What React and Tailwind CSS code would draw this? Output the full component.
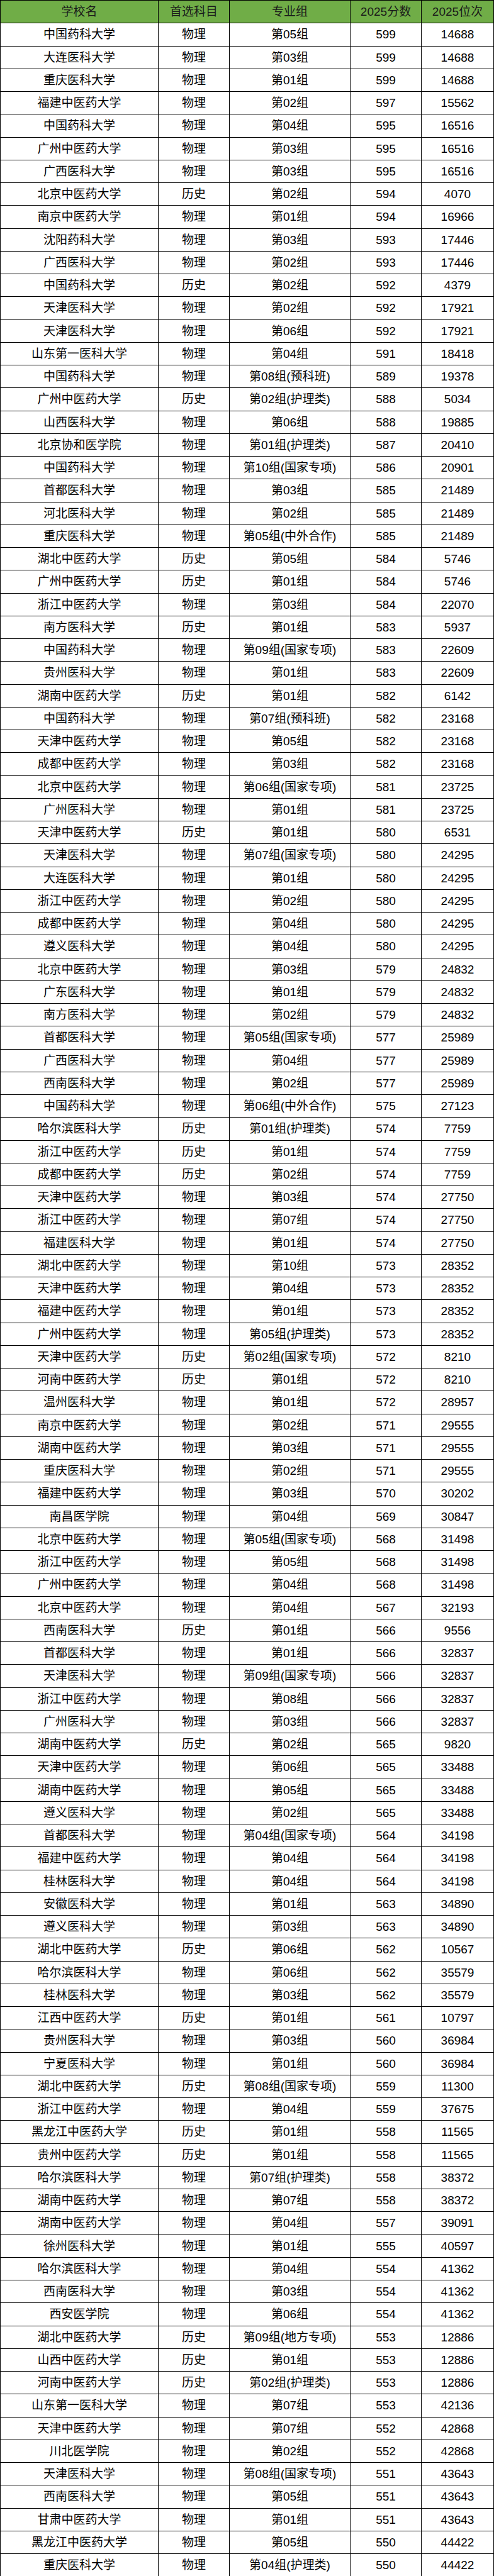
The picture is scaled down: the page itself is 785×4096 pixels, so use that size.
import React from "react";

const RAW = `中国药科大学|物理|第05组|599|14688
大连医科大学|物理|第03组|599|14688
重庆医科大学|物理|第01组|599|14688
福建中医药大学|物理|第02组|597|15562
中国药科大学|物理|第04组|595|16516
广州中医药大学|物理|第03组|595|16516
广西医科大学|物理|第03组|595|16516
北京中医药大学|历史|第02组|594|4070
南京中医药大学|物理|第01组|594|16966
沈阳药科大学|物理|第03组|593|17446
广西医科大学|物理|第02组|593|17446
中国药科大学|历史|第02组|592|4379
天津医科大学|物理|第02组|592|17921
天津医科大学|物理|第06组|592|17921
山东第一医科大学|物理|第04组|591|18418
中国药科大学|物理|第08组(预科班)|589|19378
广州中医药大学|历史|第02组(护理类)|588|5034
山西医科大学|物理|第06组|588|19885
北京协和医学院|物理|第01组(护理类)|587|20410
中国药科大学|物理|第10组(国家专项)|586|20901
首都医科大学|物理|第03组|585|21489
河北医科大学|物理|第02组|585|21489
重庆医科大学|物理|第05组(中外合作)|585|21489
湖北中医药大学|历史|第05组|584|5746
广州中医药大学|历史|第01组|584|5746
浙江中医药大学|物理|第03组|584|22070
南方医科大学|历史|第01组|583|5937
中国药科大学|物理|第09组(国家专项)|583|22609
贵州医科大学|物理|第01组|583|22609
湖南中医药大学|历史|第01组|582|6142
中国药科大学|物理|第07组(预科班)|582|23168
天津中医药大学|物理|第05组|582|23168
成都中医药大学|物理|第03组|582|23168
北京中医药大学|物理|第06组(国家专项)|581|23725
广州医科大学|物理|第01组|581|23725
天津中医药大学|历史|第01组|580|6531
天津医科大学|物理|第07组(国家专项)|580|24295
大连医科大学|物理|第01组|580|24295
浙江中医药大学|物理|第02组|580|24295
成都中医药大学|物理|第04组|580|24295
遵义医科大学|物理|第04组|580|24295
北京中医药大学|物理|第03组|579|24832
广东医科大学|物理|第01组|579|24832
南方医科大学|物理|第02组|579|24832
首都医科大学|物理|第05组(国家专项)|577|25989
广西医科大学|物理|第04组|577|25989
西南医科大学|物理|第02组|577|25989
中国药科大学|物理|第06组(中外合作)|575|27123
哈尔滨医科大学|历史|第01组(护理类)|574|7759
浙江中医药大学|历史|第01组|574|7759
成都中医药大学|历史|第02组|574|7759
天津中医药大学|物理|第03组|574|27750
浙江中医药大学|物理|第07组|574|27750
福建医科大学|物理|第01组|574|27750
湖北中医药大学|物理|第10组|573|28352
天津中医药大学|物理|第04组|573|28352
福建中医药大学|物理|第01组|573|28352
广州中医药大学|物理|第05组(护理类)|573|28352
天津中医药大学|历史|第02组(国家专项)|572|8210
河南中医药大学|历史|第01组|572|8210
温州医科大学|物理|第01组|572|28957
南京中医药大学|物理|第02组|571|29555
湖南中医药大学|物理|第03组|571|29555
重庆医科大学|物理|第02组|571|29555
福建中医药大学|物理|第03组|570|30202
南昌医学院|物理|第04组|569|30847
北京中医药大学|物理|第05组(国家专项)|568|31498
浙江中医药大学|物理|第05组|568|31498
广州中医药大学|物理|第04组|568|31498
北京中医药大学|物理|第04组|567|32193
西南医科大学|历史|第01组|566|9556
首都医科大学|物理|第01组|566|32837
天津医科大学|物理|第09组(国家专项)|566|32837
浙江中医药大学|物理|第08组|566|32837
广州医科大学|物理|第03组|566|32837
湖南中医药大学|历史|第02组|565|9820
天津中医药大学|物理|第06组|565|33488
湖南中医药大学|物理|第05组|565|33488
遵义医科大学|物理|第02组|565|33488
首都医科大学|物理|第04组(国家专项)|564|34198
福建中医药大学|物理|第04组|564|34198
桂林医科大学|物理|第04组|564|34198
安徽医科大学|物理|第01组|563|34890
遵义医科大学|物理|第03组|563|34890
湖北中医药大学|历史|第06组|562|10567
哈尔滨医科大学|物理|第06组|562|35579
桂林医科大学|物理|第03组|562|35579
江西中医药大学|历史|第01组|561|10797
贵州医科大学|物理|第03组|560|36984
宁夏医科大学|物理|第01组|560|36984
湖北中医药大学|历史|第08组(国家专项)|559|11300
浙江中医药大学|物理|第04组|559|37675
黑龙江中医药大学|历史|第01组|558|11565
贵州中医药大学|历史|第01组|558|11565
哈尔滨医科大学|物理|第07组(护理类)|558|38372
湖南中医药大学|物理|第07组|558|38372
湖南中医药大学|物理|第04组|557|39091
徐州医科大学|物理|第01组|555|40597
哈尔滨医科大学|物理|第04组|554|41362
西南医科大学|物理|第03组|554|41362
西安医学院|物理|第06组|554|41362
湖北中医药大学|历史|第09组(地方专项)|553|12886
山西中医药大学|历史|第01组|553|12886
河南中医药大学|历史|第02组(护理类)|553|12886
山东第一医科大学|物理|第07组|553|42136
天津中医药大学|物理|第07组|552|42868
川北医学院|物理|第02组|552|42868
天津医科大学|物理|第08组(国家专项)|551|43643
西南医科大学|物理|第05组|551|43643
甘肃中医药大学|物理|第01组|551|43643
黑龙江中医药大学|物理|第05组|550|44422
重庆医科大学|物理|第04组(护理类)|550|44422`;

const ROWS = RAW.split("\n").map((l) => l.split("|"));
const HEAD = ["学校名", "首选科目", "专业组", "2025分数", "2025位次"];

function Cell({ children, first }) {
  return (
    <div
      className={
        "h-[36.25px] flex items-center justify-center border-r border-b border-black whitespace-nowrap" +
        (first ? " border-l" : "")
      }
    >
      {children}
    </div>
  );
}

export default function App() {
  return (
    <div
      className="w-[785px] bg-white text-black text-[19px] leading-none"
      style={{ fontFamily: '"Liberation Sans", "Noto Sans CJK SC", sans-serif' }}
    >
      <div className="grid grid-cols-[252px_113px_192px_113px_115px] bg-[#70ad47] border-t border-black">
        {HEAD.map((h, i) => (
          <Cell key={i} first={i === 0}>
            <span className="text-[#1a1a1a]">{h}</span>
          </Cell>
        ))}
      </div>
      {ROWS.map((r, ri) => (
        <div key={ri} className="grid grid-cols-[252px_113px_192px_113px_115px]">
          {r.map((c, ci) => (
            <Cell key={ci} first={ci === 0}>
              {c}
            </Cell>
          ))}
        </div>
      ))}
    </div>
  );
}
